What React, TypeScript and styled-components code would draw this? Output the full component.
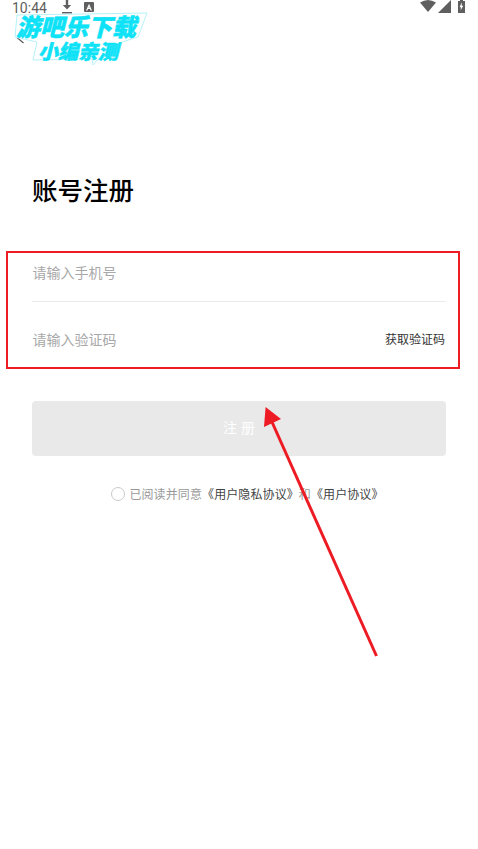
import * as React from 'react';
import styled, { createGlobalStyle } from 'styled-components';

const CJK = `"Noto Sans CJK SC", "Noto Sans", sans-serif`;

const GlobalStyle = createGlobalStyle`
  html, body {
    margin: 0;
    padding: 0;
    background: #fff;
  }
  * {
    box-sizing: border-box;
  }
`;

const Page = styled.div`
  position: relative;
  width: 478px;
  height: 849px;
  overflow: hidden;
  background: #fff;
  font-family: ${CJK};
`;

const StatusBar = styled.div`
  display: flex;
  align-items: center;
  height: 14px;
  padding: 0 13px 0 12px;
  color: #5f5f5f;
`;

const Time = styled.span`
  font-family: Roboto, sans-serif;
  font-size: 14px;
  line-height: 14px;
  width: 50px;
  padding-top: 1px;
`;

const NotifyIcons = styled.div`
  display: flex;
  align-items: center;
  gap: 12px;
  flex: 1;
`;

const SystemIcons = styled.div`
  display: flex;
  align-items: flex-start;
  height: 14px;
  gap: 2px;
`;

const BackButton = styled.div`
  display: flex;
  height: 16px;
  margin: 18px 0 0 16px;
`;

const Title = styled.h1`
  margin: 123px 0 0 32px;
  font-size: 25.5px;
  line-height: 36px;
  font-weight: 500;
  color: #000;
`;

const Form = styled.div`
  margin: 45px 32px 0;
`;

const Field = styled.div<{ $height: number; $top?: number; $bottom?: number; $divider?: boolean }>`
  display: flex;
  align-items: center;
  justify-content: space-between;
  height: ${(p) => p.$height}px;
  padding: ${(p) => p.$top ?? 0}px 1px ${(p) => p.$bottom ?? 0}px 0.5px;
  border-bottom: ${(p) => (p.$divider ? '1px solid #ececec' : 'none')};
`;

const Placeholder = styled.span`
  font-size: 14px;
  line-height: 20px;
  color: #a8a8a8;
`;

const CodeLink = styled.span`
  font-size: 12px;
  line-height: 18px;
  color: #333;
`;

const SubmitButton = styled.button`
  display: block;
  width: 414px;
  height: 55px;
  margin: 33px 32px 0;
  padding: 0 0 4px 4px;
  border: 0;
  border-radius: 4px;
  background: #e9e9e9;
  color: #fff;
  font-family: ${CJK};
  font-size: 14px;
  letter-spacing: 4px;
`;

const Agreement = styled.div`
  display: flex;
  align-items: center;
  justify-content: center;
  margin-top: 29px;
  padding-left: 17px;
  font-size: 12px;
  line-height: 18px;
  letter-spacing: 0.1px;
  color: #999;
`;

const Radio = styled.span`
  width: 14px;
  height: 14px;
  margin-right: 4px;
  border: 1px solid #c9c9c9;
  border-radius: 50%;
`;

const Strong = styled.span`
  color: #444;
`;

const Watermark = styled.div`
  position: absolute;
  left: 0;
  top: 0;
  width: 160px;
  height: 70px;
`;

const WatermarkOutline = styled.svg`
  position: absolute;
  left: 0;
  top: 0;
`;

const WatermarkText = styled.div`
  position: absolute;
  left: 13px;
  top: 13px;
  width: 126px;
  font-family: ${CJK};
  font-weight: 900;
  font-style: italic;
  text-align: center;
  color: #0de2f6;
  -webkit-text-stroke: 0.5px #0de2f6;
`;

const WatermarkLine = styled.div<{ $size: number; $indent: number }>`
  font-size: ${(p) => p.$size}px;
  line-height: 25px;
  padding-left: ${(p) => p.$indent}px;
  white-space: nowrap;
`;

const Annotation = styled.div`
  position: absolute;
  left: 6px;
  top: 251px;
  width: 454px;
  height: 118px;
  border: 2px solid #ed1c24;
`;

const ArrowLayer = styled.svg`
  position: absolute;
  left: 0;
  top: 0;
  pointer-events: none;
`;

export default function App() {
  return (
    <Page>
      <GlobalStyle />
      <StatusBar>
        <Time>10:44</Time>
        <NotifyIcons>
          <svg width="10" height="14" viewBox="0 0 10 14">
            <path d="M3.8 0h2.4v5h3L5 9.4.8 5h3z M0 12h10v1.6H0z" fill="#5f5f5f" />
          </svg>
          <svg width="10" height="10" viewBox="0 0 10 10">
            <rect width="10" height="10" rx="1" fill="#5f5f5f" />
            <path d="M2 8.4 5 1.8l3 6.6H6.6L6 7H4l-.6 1.4zM4.5 5.6h1L5 4.4z" fill="#fff" />
          </svg>
        </NotifyIcons>
        <SystemIcons>
          <svg width="16" height="12" viewBox="0 0 16 12">
            <path d="M0 2.5Q8-2.5 16 2.5L8 12z" fill="#5f5f5f" />
          </svg>
          <svg width="13" height="13" viewBox="0 0 13 13">
            <path d="M0 13 13 0v13z" fill="#5f5f5f" />
          </svg>
          <svg width="7" height="13" viewBox="0 0 7 13" style={{ marginLeft: 5 }}>
            <path d="M0 1h2V0h3v1h2v12H0z" fill="#5f5f5f" />
            <path d="M3.6 2.5 1.6 7.2H3L2.6 10.5 5.2 5.8H3.8z" fill="#fff" />
          </svg>
        </SystemIcons>
      </StatusBar>
      <BackButton>
        <svg width="9" height="12" viewBox="0 0 9 12">
          <path d="M7.5 1 1.5 6l6 5" fill="none" stroke="#555" strokeWidth="1.1" />
        </svg>
      </BackButton>
      <Title>账号注册</Title>
      <Form>
        <Field $height={50} $bottom={10} $divider>
          <Placeholder>请输入手机号</Placeholder>
        </Field>
        <Field $height={66} $top={8}>
          <Placeholder>请输入验证码</Placeholder>
          <CodeLink>获取验证码</CodeLink>
        </Field>
      </Form>
      <SubmitButton>注册</SubmitButton>
      <Agreement>
        <Radio />
        已阅读并同意<Strong>《用户隐私协议》</Strong>和<Strong>《用户协议》</Strong>
      </Agreement>
      <Watermark>
        <WatermarkOutline width="160" height="70" viewBox="0 0 160 70">
          <path
            d="M17 15 147 13 138 37 122 42 118 57 97 60 93 65 92 59 33 60 37 42 15 37z"
            fill="#fff"
            stroke="#b5f2f9"
            strokeWidth="1"
          />
        </WatermarkOutline>
        <WatermarkText>
          <WatermarkLine $size={24} $indent={0}>游吧乐下载</WatermarkLine>
          <WatermarkLine $size={20} $indent={4}>小编亲测</WatermarkLine>
        </WatermarkText>
      </Watermark>
      <Annotation />
      <ArrowLayer width="478" height="849" viewBox="0 0 478 849">
        <path d="M376.5 656 272 422" stroke="#ed1c24" strokeWidth="3" fill="none" />
        <path d="M265.6 407 281 419 264 427z" fill="#ed1c24" />
      </ArrowLayer>
    </Page>
  );
}
